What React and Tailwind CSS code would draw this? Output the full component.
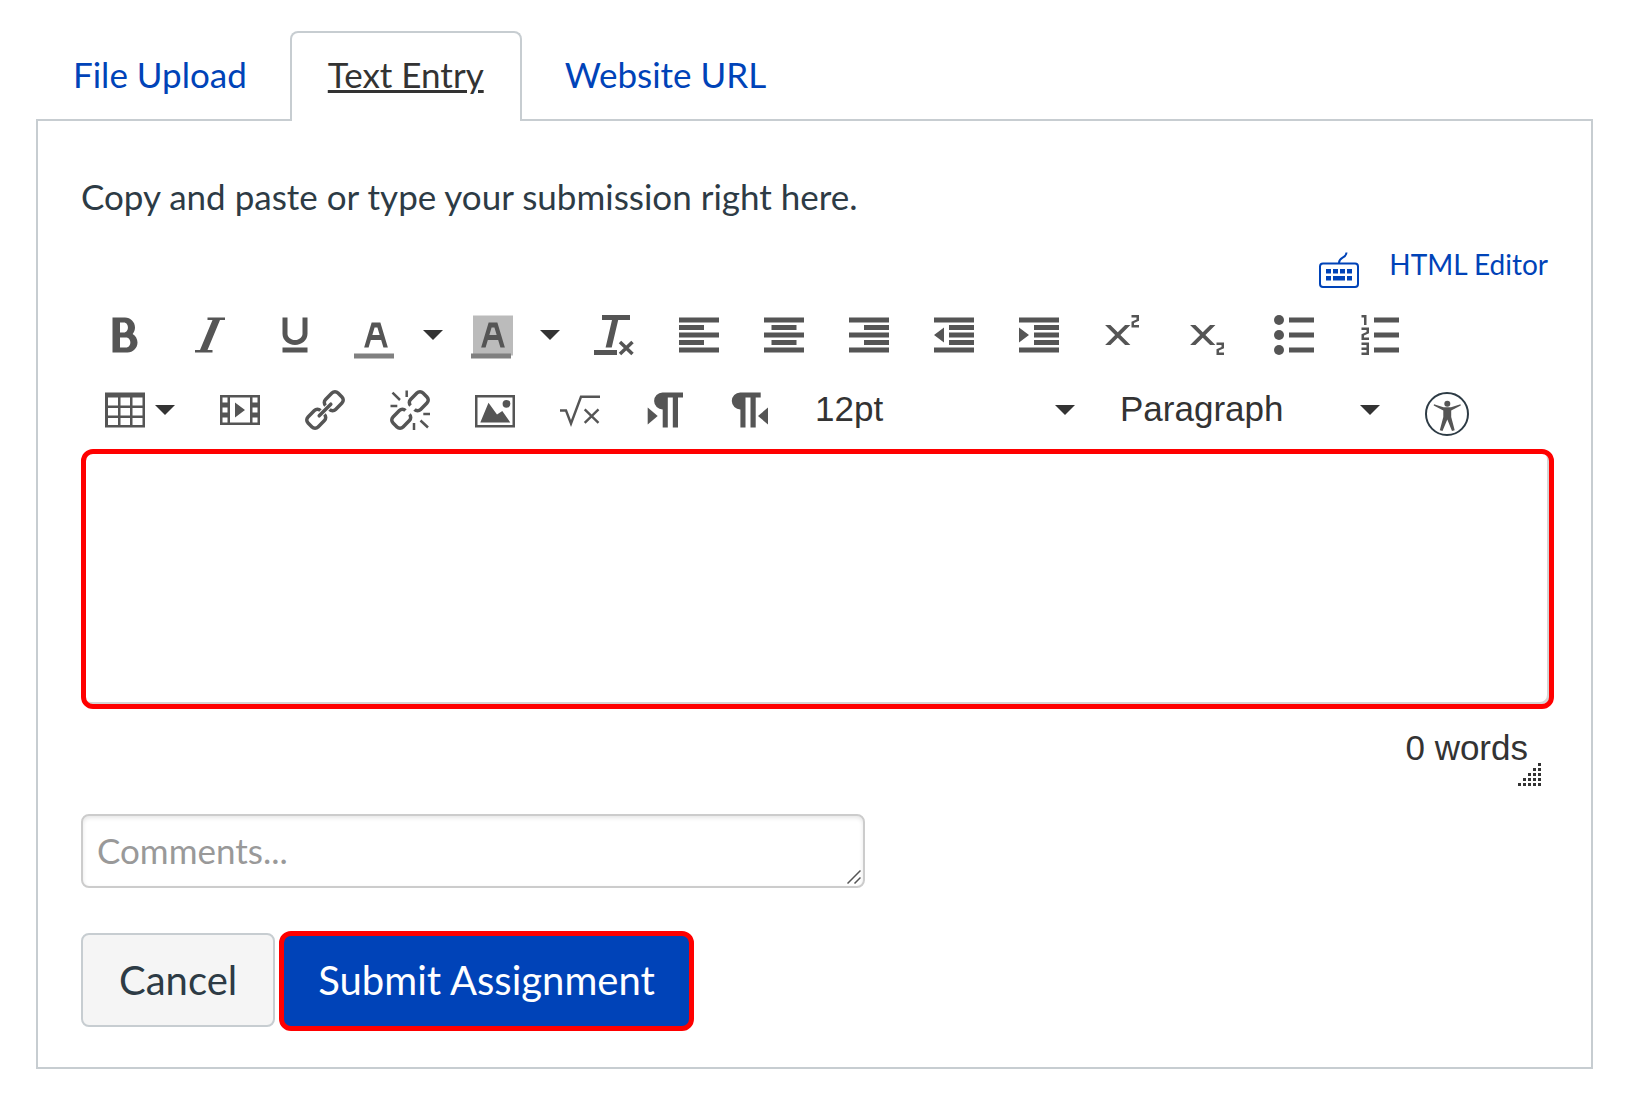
import { useState } from "react";

const TABS = ["File Upload", "Text Entry", "Website URL"];

const two = "v50h128v64h-192v-146l128-60v-50h-128v-64h192v146z";
const linkLoop =
  "M3.6-2.8A4.3 4.3 0 0 1 7.9-7.1H16.9A4.3 4.3 0 0 1 21.2-2.8V2.8A4.3 4.3 0 0 1 16.9 7.1H7.9A4.3 4.3 0 0 1 3.6 2.8";
const letterA =
  "M322 832l57.6-192h264.8l57.6 192h113.6l-192-640h-223.2l-192 640zM475.6 320h72.8l57.6 192h-188z";

// 1024 unit glyph
function Glyph({ d }) {
  return (
    <svg className="h-10 w-10" viewBox="0 0 1024 1024" fill="currentColor" fillRule="evenodd" aria-hidden="true">
      <path d={d} />
    </svg>
  );
}

// 16 unit glyph, used by the line based icons
function Lines({ d, children }) {
  return (
    <svg className="h-10 w-10" viewBox="0 0 16 16" fill="currentColor" aria-hidden="true">
      <path d={d} />
      {children}
    </svg>
  );
}

function Art({ children }) {
  return (
    <svg className="h-10 w-10 overflow-visible" viewBox="0 0 40 40" fill="currentColor" aria-hidden="true">
      {children}
    </svg>
  );
}

function Caret() {
  return (
    <svg className="h-[10px] w-5 text-[#333]" viewBox="0 0 20 10" fill="currentColor" aria-hidden="true">
      <path d="M0 0h20L10 10z" />
    </svg>
  );
}

function Pilcrow({ x }) {
  return <path transform={`translate(${x} 0)`} d="M17.5 2.5H38v5H33v30h-5.2v-30h-5v30h-5.1V19.5A8.5 8.5 0 0 1 17.5 2.5z" />;
}

const ROW_ONE = [
  {
    name: "Bold",
    icon: (
      <Glyph d="M707.9 484.7c37.5-44.5 60.1-102 60.1-164.7 0-141.2-114.8-256-256-256h-320v896h384c141.2 0 256-114.8 256-256 0-93-49.8-174.5-124.1-219.3zM384 192h101.5c56 0 101.5 57.4 101.5 128s-45.5 128-101.5 128H384zM543 832H384V576h159c58.5 0 106 57.4 106 128s-47.5 128-106 128z" />
    ),
  },
  { name: "Italic", icon: <Glyph d="M896 64v64h-128l-320 768h128v64h-448v-64h128l320-768h-128v-64z" /> },
  {
    name: "Underline",
    icon: (
      <Glyph d="M704 64h128v416c0 159-143.3 288-320 288s-320-129-320-288V64h128v416c0 40.2 18.2 78.7 51.4 108.5 36.9 33.2 86.8 51.5 140.6 51.5s103.8-18.3 140.6-51.5c33.2-29.8 51.4-68.3 51.4-108.5zM192 832h640v128H192z" />
    ),
  },
];

const ROW_ONE_REST = [
  {
    name: "Clear formatting",
    icon: (
      <Art>
        <path d="M8 0h28v5H24.2L17.7 32.500H11.600L18 5H8zM0 35h23v5H0z" />
        <path d="M26 27L38.500 39M38.500 27L26 39" stroke="currentColor" strokeWidth="3.500" />
      </Art>
    ),
  },
  { name: "Align left", icon: <Lines d="M0 1h16v2H0zM0 4h10v2H0zM0 7h16v2H0zM0 10h10v2H0zM0 13h16v2H0z" /> },
  { name: "Align center", icon: <Lines d="M0 1h16v2H0zM3 4h10v2H3zM0 7h16v2H0zM3 10h10v2H3zM0 13h16v2H0z" /> },
  { name: "Align right", icon: <Lines d="M0 1h16v2H0zM6 4h10v2H6zM0 7h16v2H0zM6 10h10v2H6zM0 13h16v2H0z" /> },
  { name: "Decrease indent", icon: <Lines d="M0 1h16v2H0zM6 4h10v2H6zM6 7h10v2H6zM6 10h10v2H6zM0 13h16v2H0zM4 5v6L0 8z" /> },
  { name: "Increase indent", icon: <Lines d="M0 1h16v2H0zM6 4h10v2H6zM6 7h10v2H6zM6 10h10v2H6zM0 13h16v2H0zM0 5v6L4 8z" /> },
  {
    name: "Superscript",
    icon: <Glyph d={`M768 206${two}M676 256H540L352 444 164 256H28l256 256L28 768h136l188-188 188 188h136L420 512z`} />,
  },
  {
    name: "Subscript",
    icon: <Glyph d={`M768 910${two}M676 256H540L352 444 164 256H28l256 256L28 768h136l188-188 188 188h136L420 512z`} />,
  },
  {
    name: "Bullet list",
    icon: (
      <Lines d="M6 1h10v2H6zM6 7h10v2H6zM6 13h10v2H6z">
        <circle cx="2" cy="2" r="2" />
        <circle cx="2" cy="8" r="2" />
        <circle cx="2" cy="14" r="2" />
      </Lines>
    ),
  },
  {
    name: "Numbered list",
    icon: (
      <Glyph d={`M384 832h640v128H384zM384 448h640v128H384zM384 64h640v128H384zM192 0v256h-64V64H64V0zM128 526${two}M256 704v320H64v-64h128v-64H64v-64h128v-64H64v-64z`} />
    ),
  },
];

const ROW_TWO = [
  {
    name: "Embed media",
    icon: (
      <Glyph d="M0 128v768h1024V128zM192 832H64V704h128zM192 576H64V448h128zM192 320H64V192h128zM768 832H256V192h512zM960 832H832V704h128zM960 576H832V448h128zM960 320H832V192h128zM384 320v384l256-192z" />
    ),
  },
  {
    name: "Insert link",
    icon: (
      <Art>
        <g fill="none" stroke="currentColor" strokeWidth="3.500">
          <path transform="translate(20 20) rotate(-45)" d={linkLoop} />
          <path transform="translate(20 20) rotate(135)" d={linkLoop} />
          <path d="M14.200 25.800L25.800 14.200" strokeLinecap="round" />
        </g>
      </Art>
    ),
  },
  {
    name: "Remove link",
    icon: (
      <Art>
        <g fill="none" stroke="currentColor" strokeWidth="3.500">
          <path transform="translate(20 20) rotate(-45)" d={linkLoop} />
          <path transform="translate(20 20) rotate(135)" d={linkLoop} />
          <path
            strokeWidth="2.500"
            d="M2.500 2.700L10 10M16.700 0.500V7M0.500 16H7.300M33.300 24H40M24 33V40M30.500 30.500L38 37.500"
          />
        </g>
      </Art>
    ),
  },
  {
    name: "Insert image",
    icon: (
      <Art>
        <path fillRule="evenodd" d="M0 5h40v32.500H0zM2.500 7.500V35h35V7.500z" />
        <path d="M5.300 32.500L13.500 12.800 22 24.500 27.300 21 35.300 32.500z" />
        <circle cx="31.500" cy="13.800" r="3.900" />
      </Art>
    ),
  },
  {
    name: "Insert equation",
    icon: (
      <Art>
        <g fill="none" stroke="currentColor" strokeWidth="2.400">
          <path d="M0 20.500H6L11 33.500 21 6.800H40" />
          <path d="M24.700 19.300L38.500 32.800M38.500 19.300L24.700 32.800" />
        </g>
      </Art>
    ),
  },
  {
    name: "Left to right",
    icon: (
      <Art>
        <Pilcrow x={0} />
        <path d="M2.700 17.500v17L12.700 26z" />
      </Art>
    ),
  },
  {
    name: "Right to left",
    icon: (
      <Art>
        <Pilcrow x={-7.3} />
        <path d="M38 17.500v17L28 26z" />
      </Art>
    ),
  },
];

function ToolButton({ name, icon }) {
  return (
    <button type="button" aria-label={name} className="flex h-[75px] w-[85px] items-center pl-[22px]">
      {icon}
    </button>
  );
}

function ColorButton({ name, highlighted }) {
  return (
    <div className="flex h-[75px] w-[117px] items-center pl-4">
      <button type="button" aria-label={name} className="pt-1">
        <svg className="h-11 w-[42px]" viewBox="0 0 42 44" fill="currentColor" aria-hidden="true">
          {highlighted && <path fill="#bbb" d="M2 0.500h40v40H2z" />}
          <path fillRule="evenodd" transform="translate(2 0) scale(.0390625)" d={letterA} />
          <path fill="#808080" d="M0 38.500h40v5H0z" />
        </svg>
      </button>
      <button type="button" aria-label={`${name} options`} className="pl-[27px]">
        <Caret />
      </button>
    </div>
  );
}

function ToolSelect({ label, options }) {
  return (
    <div className="relative w-[305px]">
      <select
        aria-label={label}
        className="h-[75px] w-full appearance-none bg-transparent pl-[22px] font-['Liberation_Sans',sans-serif] text-[35px] text-[#333]"
      >
        {options.map((o) => (
          <option key={o}>{o}</option>
        ))}
      </select>
      <div className="pointer-events-none absolute inset-y-0 right-[23px] flex items-center">
        <Caret />
      </div>
    </div>
  );
}

function KeyboardIcon() {
  return (
    <svg className="h-9 w-10" viewBox="0 0 40 36" fill="currentColor" aria-hidden="true">
      <g fill="none" stroke="currentColor" strokeWidth="2">
        <rect x="1" y="11.500" width="38" height="23.500" rx="3" />
        <path d="M20 11C20 4.500 27 7 27.500 0.500" />
      </g>
      <path d="M7 17h5v4.500H7zM14 17h5v4.500h-5zM21 17h5v4.500h-5zM28 17h5v4.500h-5zM7 24h5v4.500H7zM14 24h12v4.500H14zM28 24h5v4.500h-5z" />
    </svg>
  );
}

function ResizeDots() {
  const dots = [];
  for (let row = 0; row < 5; row++) {
    for (let col = 4 - row; col < 5; col++) {
      dots.push(<rect key={`${row}-${col}`} x={col * 5} y={row * 5} width="3" height="3" />);
    }
  }
  return (
    <svg className="absolute right-[13px] top-10 h-[23px] w-[23px] text-[#333]" viewBox="0 0 23 23" fill="currentColor" aria-hidden="true">
      {dots}
    </svg>
  );
}

export default function App() {
  const [activeTab, setActiveTab] = useState("Text Entry");
  const [body, setBody] = useState("");
  const [comment, setComment] = useState("");

  const words = body.trim() ? body.trim().split(/\s+/).length : 0;

  return (
    <main className="bg-white pl-9 pr-[35px] pt-[31px] font-[Lato,sans-serif] text-[35px] text-[#2d3b45]">
      {/* TABS */}
      <nav className="relative -mb-[2px] -ml-px flex gap-[5px]">
        {TABS.map((tab) => (
          <a
            key={tab}
            href="#"
            onClick={(e) => {
              e.preventDefault();
              setActiveTab(tab);
            }}
            className={
              tab === activeTab
                ? "h-[90px] rounded-t-lg border-2 border-b-0 border-[#c7cdd1] bg-white px-9 pt-[14px] leading-[54px] text-[#333] underline"
                : "h-[88px] border-2 border-b-0 border-transparent px-9 pt-[14px] leading-[54px] text-[#0043b8]"
            }
          >
            {tab}
          </a>
        ))}
      </nav>

      <section className="border-2 border-[#c7cdd1] pb-9 pl-[43px] pr-[37px] pt-12">
        <p className="leading-[54px]">Copy and paste or type your submission right here.</p>

        <div className="mt-5 flex items-start justify-end gap-[30px] pr-[6px] text-[#0043b8]">
          <button type="button" aria-label="Keyboard shortcuts" className="pt-[9px]">
            <KeyboardIcon />
          </button>
          <a href="#" className="text-[28px] leading-[42px]">
            HTML Editor
          </a>
        </div>

        {/* TOOLBAR */}
        <div className="mt-[9px] pl-[2px] text-[#555]">
          <div className="flex">
            {ROW_ONE.map((b) => (
              <ToolButton key={b.name} {...b} />
            ))}
            <ColorButton name="Text color" />
            <ColorButton name="Background color" highlighted />
            {ROW_ONE_REST.map((b) => (
              <ToolButton key={b.name} {...b} />
            ))}
          </div>
          <div className="flex">
            <button type="button" aria-label="Table" className="flex h-[75px] w-[115px] items-center gap-[10px] pl-[22px]">
              <Art>
                <path
                  fillRule="evenodd"
                  d="M0 2.500h40v35H0zM3 7.500v8h10v-8zM15.500 7.500v8H25v-8zM27.500 7.500v8H37.500v-8zM3 18v7.500h10V18zM15.500 18v7.500H25V18zM27.500 18v7.500H37.500V18zM3 28v7h10v-7zM15.500 28v7H25v-7zM27.500 28v7H37.500v-7z"
                />
              </Art>
              <Caret />
            </button>
            {ROW_TWO.map((b) => (
              <ToolButton key={b.name} {...b} />
            ))}
            <ToolSelect label="Font size" options={["12pt", "14pt", "18pt", "24pt", "36pt"]} />
            <ToolSelect label="Block format" options={["Paragraph", "Heading 2", "Heading 3", "Heading 4", "Preformatted"]} />
            <button type="button" aria-label="Check accessibility" className="flex items-center pl-[22px] pt-2">
              <svg className="h-11 w-11" viewBox="0 0 44 44" fill="currentColor" aria-hidden="true">
                <circle cx="22" cy="22" r="21" fill="none" stroke="#2d3b45" strokeWidth="2" />
                <circle cx="22.300" cy="11.700" r="3" />
                <path d="M9 12.200L18.500 15.300H26L35.500 12.200 35.800 13.500 26.200 18.500V25L29.700 38.300 27 39 22.300 27.500 17.500 39 14.800 38.300 18.300 25V18.500L8.700 13.500z" />
              </svg>
            </button>
          </div>
        </div>

        <textarea
          aria-label="Submission text"
          value={body}
          onChange={(e) => setBody(e.target.value)}
          className="mt-[2px] block h-[260px] w-full resize-none rounded-xl border-[5px] border-[#f00] p-5 shadow-[inset_-2px_-2px_0_#d5d5d5] outline-none"
        />

        <div className="relative mt-[14px] pr-[26px] text-right font-['Liberation_Sans',sans-serif] text-[35px] leading-[50px] text-[#333]">
          {words} words
          <ResizeDots />
        </div>

        {/* COMMENTS */}
        <div className="relative mt-[41px] w-[784px] max-w-full">
          <textarea
            aria-label="Comments"
            placeholder="Comments..."
            value={comment}
            onChange={(e) => setComment(e.target.value)}
            className="block h-[74px] w-full resize-none overflow-hidden rounded-lg border-2 border-[#ccc] px-[14px] pt-[7px] leading-[54px] shadow-[inset_0_2px_4px_rgba(0,0,0,0.1)] outline-none placeholder:text-[#999]"
          />
          <svg className="absolute bottom-1 right-1 h-[14px] w-[14px]" viewBox="0 0 14 14" fill="none" stroke="#555" strokeWidth="1.500" aria-hidden="true">
            <path d="M0.500 13.500L13.500 0.500M7.500 13.500L13.500 7.500" />
          </svg>
        </div>

        <div className="mt-[43px] flex gap-1">
          <button
            type="button"
            className="mt-[2px] h-[94px] rounded-lg border-2 border-[#c7cdd1] bg-[#f5f5f5] px-9 text-[40px]"
          >
            Cancel
          </button>
          <button type="submit" className="h-[100px] rounded-xl border-[5px] border-[#f00] bg-[#0043b8] px-[34px] pb-[2px] text-[40px] text-white">
            Submit Assignment
          </button>
        </div>
      </section>
    </main>
  );
}
